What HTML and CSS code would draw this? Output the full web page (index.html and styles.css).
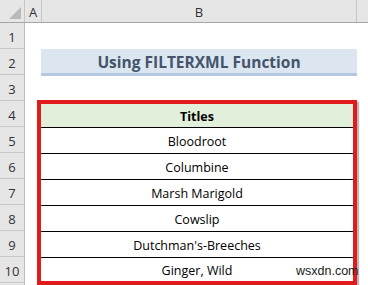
FILE: index.html
```html
<!DOCTYPE html>
<html>
<head>
<meta charset="utf-8">
<link rel="stylesheet" href="styles.css">
</head>
<body>
<div class="sheet">
  <div class="colheads">
    <div class="corner"><span class="tri"></span></div>
    <div class="colhead col-a">A</div>
    <div class="colhead col-b">B</div>
    <div class="colhead col-c"></div>
  </div>
  <div class="body">
    <div class="rowheads">
      <div class="rh">1</div>
      <div class="rh">2</div>
      <div class="rh">3</div>
      <div class="rh">4</div>
      <div class="rh">5</div>
      <div class="rh">6</div>
      <div class="rh">7</div>
      <div class="rh">8</div>
      <div class="rh">9</div>
      <div class="rh">10</div>
    </div>
    <div class="cells">
      <div class="blank"></div>
      <div class="title">Using FILTERXML Function</div>
      <div class="blank gap"></div>
      <div class="box">
        <div class="th">Titles</div>
        <div class="td">Bloodroot</div>
        <div class="td">Columbine</div>
        <div class="td">Marsh Marigold</div>
        <div class="td">Cowslip</div>
        <div class="td">Dutchman's-Breeches</div>
        <div class="td last">Ginger, Wild</div>
      </div>
      <div class="watermark">wsxdn.com</div>
    </div>
  </div>
</div>
</body>
</html>
```

FILE: styles.css
```css
html, body {
  margin: 0;
  padding: 0;
  background: #ffffff;
  overflow: hidden;
}
.sheet {
  width: 368px;
  height: 285px;
  font-family: "Open Sans", "Liberation Sans", sans-serif;
  overflow: hidden;
}
.colheads {
  display: flex;
  height: 22px;
  background: #e6e6e6;
  border-bottom: 1px solid #a6a6a6;
}
.corner {
  width: 24px;
  border-right: 1px solid #c6c6c6;
  position: relative;
}
.tri {
  position: absolute;
  right: 3px;
  bottom: 3px;
  width: 0;
  height: 0;
  border-left: 12px solid transparent;
  border-bottom: 12px solid #b9b9b9;
}
.colhead {
  display: flex;
  align-items: center;
  justify-content: center;
  font-size: 13px;
  color: #333;
  border-right: 1px solid #c6c6c6;
  padding-top: 2px;
  box-sizing: border-box;
}
.col-a { width: 17px; }
.col-b { width: 315px; }
.col-c { flex: 1; border-right: none; }
.body {
  display: flex;
}
.rowheads {
  width: 24px;
  background: #e6e6e6;
  border-right: 1px solid #bcbcbc;
  display: flex;
  flex-direction: column;
}
.rh {
  border-bottom: 1px solid #c8c8c8;
  display: flex;
  align-items: center;
  justify-content: center;
  font-size: 13px;
  color: #333;
  padding-top: 3px;
  height: 22px;
}
.cells {
  flex: 1;
  position: relative;
  display: flex;
  flex-direction: column;
}
.blank {
  height: 26px;
}
.gap {
  height: 24px;
}
.title {
  margin-left: 16px;
  width: 316px;
  height: 22px;
  padding-top: 2px;
  background: #dce6f1;
  border-bottom: 3px solid #b4c8e1;
  display: flex;
  align-items: center;
  justify-content: center;
  font-weight: 700;
  font-size: 15.5px;
  color: #44546a;
}
.box {
  margin-left: 12px;
  width: 312px;
  border: 4px solid #e11b1b;
  box-shadow: 2px 2px 1px rgba(0, 0, 0, 0.28);
  display: flex;
  flex-direction: column;
}
.th {
  height: 22px;
  padding-top: 1px;
  background: #e2efda;
  border-bottom: 1px solid #000;
  display: flex;
  align-items: center;
  justify-content: center;
  font-weight: 700;
  font-size: 12.5px;
  color: #000;
}
.td {
  height: 24px;
  padding-top: 1px;
  border-bottom: 1px solid #000;
  display: flex;
  align-items: center;
  justify-content: center;
  font-size: 12.5px;
  color: #000;
}
.td.last {
  border-bottom: none;
  height: 22px;
}
.watermark {
  position: absolute;
  left: 271px;
  top: 241px;
  font-family: "Liberation Sans", sans-serif;
  font-size: 12.5px;
  color: #222;
}
```
